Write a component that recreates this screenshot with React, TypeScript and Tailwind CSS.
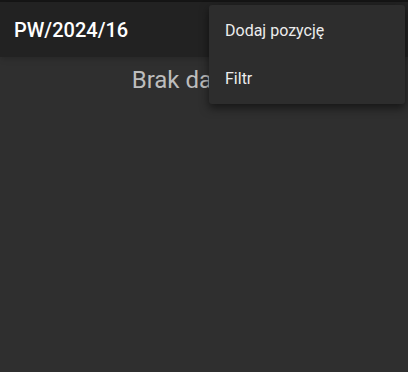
export default function App() {
  return (
    <div className="relative h-[372px] w-[408px] overflow-hidden bg-[#2f2f2f] font-['Roboto',sans-serif]">
      <div className="h-[2px] bg-[#151515]" />
      <header className="flex h-[55px] items-center bg-[#222222] px-[14px] shadow-md">
        <h1 className="text-[20px] font-medium text-white">PW/2024/16</h1>
      </header>
      <div className="flex justify-center pt-[5px] pr-[14px]">
        <p className="text-[24px] text-[#bdbdbd]">Brak danych</p>
      </div>

      {/* overflow menu, open */}
      <div className="absolute left-[209px] top-[5px] w-[196px] rounded-[3px] bg-[#2d2d2d] pt-[2px] pb-[1px] shadow-[0_4px_10px_rgba(0,0,0,0.55)]">
        <div className="flex h-[48px] items-center px-[16px] text-[16px] text-[#ececec]">Dodaj pozycję</div>
        <div className="flex h-[48px] items-center px-[16px] text-[16px] text-[#ececec]">Filtr</div>
      </div>
    </div>
  );
}
